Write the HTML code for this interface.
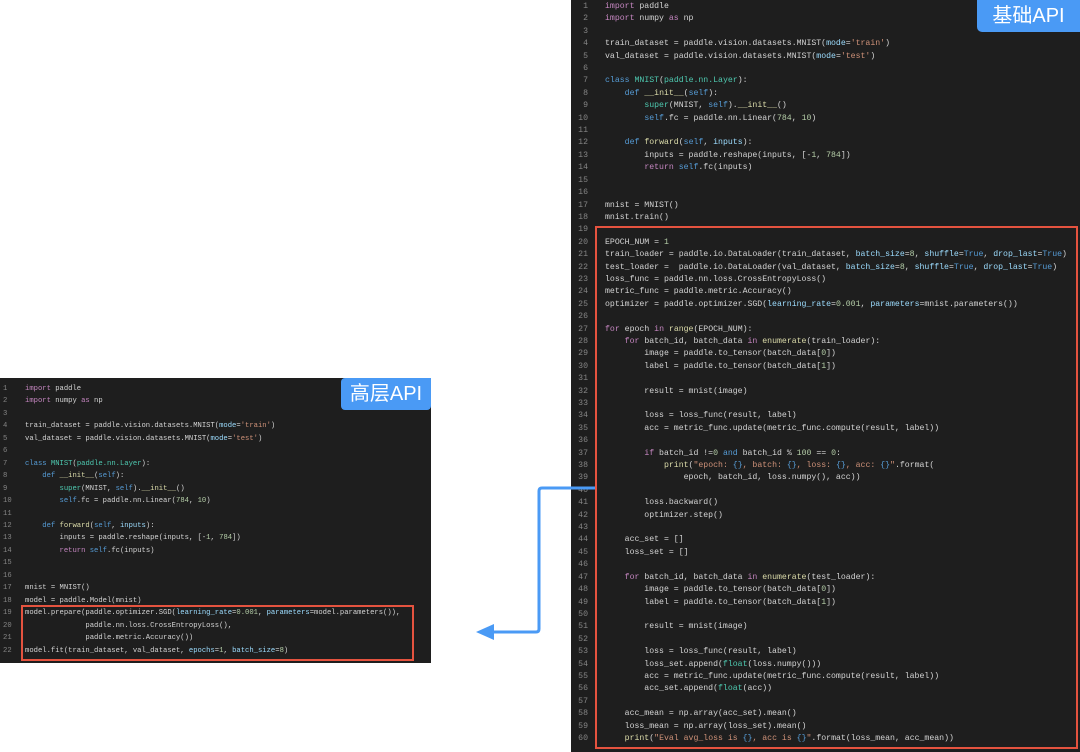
<!DOCTYPE html>
<html><head><meta charset="utf-8"><style>
body{margin:0;width:1080px;height:752px;background:#fff;position:relative;overflow:hidden;font-family:"Liberation Mono",monospace}
.panel{position:absolute;background:#1e1e1e}
pre{margin:0;position:absolute;font-family:"Liberation Mono",monospace;color:#d4d4d4;white-space:pre}
.ln{color:#858585;text-align:right}
.k{color:#c586c0}.b{color:#569cd6}.t{color:#4ec9b0}.f{color:#dcdcaa}.p{color:#9cdcfe}.s{color:#ce9178}.n{color:#b5cea8}
.red{position:absolute;border:2px solid #e5533f;box-sizing:border-box}
.lab{position:absolute;background:#4a9af5;color:#fff;font-family:"Liberation Sans","Noto Sans CJK SC",sans-serif;text-align:center;border-radius:4px}
</style></head><body>
<div class="panel" style="left:571px;top:0;width:509px;height:752px"></div>
<pre class="ln" style="left:571px;top:1px;width:17px;font-size:8.2px;line-height:12.4px">1
2
3
4
5
6
7
8
9
10
11
12
13
14
15
16
17
18
19
20
21
22
23
24
25
26
27
28
29
30
31
32
33
34
35
36
37
38
39
40
41
42
43
44
45
46
47
48
49
50
51
52
53
54
55
56
57
58
59
60</pre>
<pre style="left:605px;top:1px;font-size:8.2px;line-height:12.4px"><span class="k">import</span> paddle
<span class="k">import</span> numpy <span class="k">as</span> np

train_dataset = paddle.vision.datasets.MNIST(<span class="p">mode</span>=<span class="s">'train'</span>)
val_dataset = paddle.vision.datasets.MNIST(<span class="p">mode</span>=<span class="s">'test'</span>)

<span class="b">class</span> <span class="t">MNIST</span>(<span class="t">paddle.nn.Layer</span>):
    <span class="b">def</span> <span class="f">__init__</span>(<span class="b">self</span>):
        <span class="t">super</span>(MNIST, <span class="b">self</span>).<span class="f">__init__</span>()
        <span class="b">self</span>.fc = paddle.nn.Linear(<span class="n">784</span>, <span class="n">10</span>)

    <span class="b">def</span> <span class="f">forward</span>(<span class="b">self</span>, <span class="p">inputs</span>):
        inputs = paddle.reshape(inputs, [-<span class="n">1</span>, <span class="n">784</span>])
        <span class="k">return</span> <span class="b">self</span>.fc(inputs)


mnist = MNIST()
mnist.train()

EPOCH_NUM = <span class="n">1</span>
train_loader = paddle.io.DataLoader(train_dataset, <span class="p">batch_size</span>=<span class="n">8</span>, <span class="p">shuffle</span>=<span class="b">True</span>, <span class="p">drop_last</span>=<span class="b">True</span>)
test_loader =  paddle.io.DataLoader(val_dataset, <span class="p">batch_size</span>=<span class="n">8</span>, <span class="p">shuffle</span>=<span class="b">True</span>, <span class="p">drop_last</span>=<span class="b">True</span>)
loss_func = paddle.nn.loss.CrossEntropyLoss()
metric_func = paddle.metric.Accuracy()
optimizer = paddle.optimizer.SGD(<span class="p">learning_rate</span>=<span class="n">0.001</span>, <span class="p">parameters</span>=mnist.parameters())

<span class="k">for</span> epoch <span class="k">in</span> <span class="f">range</span>(EPOCH_NUM):
    <span class="k">for</span> batch_id, batch_data <span class="k">in</span> <span class="f">enumerate</span>(train_loader):
        image = paddle.to_tensor(batch_data[<span class="n">0</span>])
        label = paddle.to_tensor(batch_data[<span class="n">1</span>])

        result = mnist(image)

        loss = loss_func(result, label)
        acc = metric_func.update(metric_func.compute(result, label))

        <span class="k">if</span> batch_id !=<span class="n">0</span> <span class="b">and</span> batch_id % <span class="n">100</span> == <span class="n">0</span>:
            <span class="f">print</span>(<span class="s">"epoch: </span><span class="b">{}</span><span class="s">, batch: </span><span class="b">{}</span><span class="s">, loss: </span><span class="b">{}</span><span class="s">, acc: </span><span class="b">{}</span><span class="s">"</span>.format(
                epoch, batch_id, loss.numpy(), acc))

        loss.backward()
        optimizer.step()

    acc_set = []
    loss_set = []

    <span class="k">for</span> batch_id, batch_data <span class="k">in</span> <span class="f">enumerate</span>(test_loader):
        image = paddle.to_tensor(batch_data[<span class="n">0</span>])
        label = paddle.to_tensor(batch_data[<span class="n">1</span>])

        result = mnist(image)

        loss = loss_func(result, label)
        loss_set.append(<span class="t">float</span>(loss.numpy()))
        acc = metric_func.update(metric_func.compute(result, label))
        acc_set.append(<span class="t">float</span>(acc))

    acc_mean = np.array(acc_set).mean()
    loss_mean = np.array(loss_set).mean()
    <span class="f">print</span>(<span class="s">"Eval avg_loss is </span><span class="b">{}</span><span class="s">, acc is </span><span class="b">{}</span><span class="s">"</span>.format(loss_mean, acc_mean))</pre>
<div class="red" style="left:595px;top:226px;width:483px;height:523px"></div>
<div class="lab" style="left:977px;top:0;width:103px;height:32px;font-size:20px;line-height:32px;border-radius:0 0 0 5px">基础API</div>

<div class="panel" style="left:0;top:378px;width:431px;height:285px"></div>
<pre class="ln" style="left:0;top:383px;width:12px;font-size:7.2px;line-height:12.45px;text-align:left;padding-left:3px">1
2
3
4
5
6
7
8
9
10
11
12
13
14
15
16
17
18
19
20
21
22</pre>
<pre style="left:25px;top:383px;font-size:7.2px;line-height:12.45px"><span class="k">import</span> paddle
<span class="k">import</span> numpy <span class="k">as</span> np

train_dataset = paddle.vision.datasets.MNIST(<span class="p">mode</span>=<span class="s">'train'</span>)
val_dataset = paddle.vision.datasets.MNIST(<span class="p">mode</span>=<span class="s">'test'</span>)

<span class="b">class</span> <span class="t">MNIST</span>(<span class="t">paddle.nn.Layer</span>):
    <span class="b">def</span> <span class="f">__init__</span>(<span class="b">self</span>):
        <span class="t">super</span>(MNIST, <span class="b">self</span>).<span class="f">__init__</span>()
        <span class="b">self</span>.fc = paddle.nn.Linear(<span class="n">784</span>, <span class="n">10</span>)

    <span class="b">def</span> <span class="f">forward</span>(<span class="b">self</span>, <span class="p">inputs</span>):
        inputs = paddle.reshape(inputs, [-<span class="n">1</span>, <span class="n">784</span>])
        <span class="k">return</span> <span class="b">self</span>.fc(inputs)


mnist = MNIST()
model = paddle.Model(mnist)
model.prepare(paddle.optimizer.SGD(<span class="p">learning_rate</span>=<span class="n">0.001</span>, <span class="p">parameters</span>=model.parameters()),
              paddle.nn.loss.CrossEntropyLoss(),
              paddle.metric.Accuracy())
model.fit(train_dataset, val_dataset, <span class="p">epochs</span>=<span class="n">1</span>, <span class="p">batch_size</span>=<span class="n">8</span>)</pre>
<div class="red" style="left:21px;top:605px;width:393px;height:56px"></div>
<div class="lab" style="left:341px;top:378px;width:90px;height:32px;font-size:20px;line-height:32px;border-radius:4px 0 4px 4px">高层API</div>

<svg style="position:absolute;left:0;top:0" width="1080" height="752">
<path d="M595 488 H542 Q539 488 539 491 V629 Q539 632 536 632 H490" fill="none" stroke="#4a9af5" stroke-width="3"/>
<path d="M476 632 L494 624 L494 640 Z" fill="#4a9af5"/>
</svg>
</body></html>
